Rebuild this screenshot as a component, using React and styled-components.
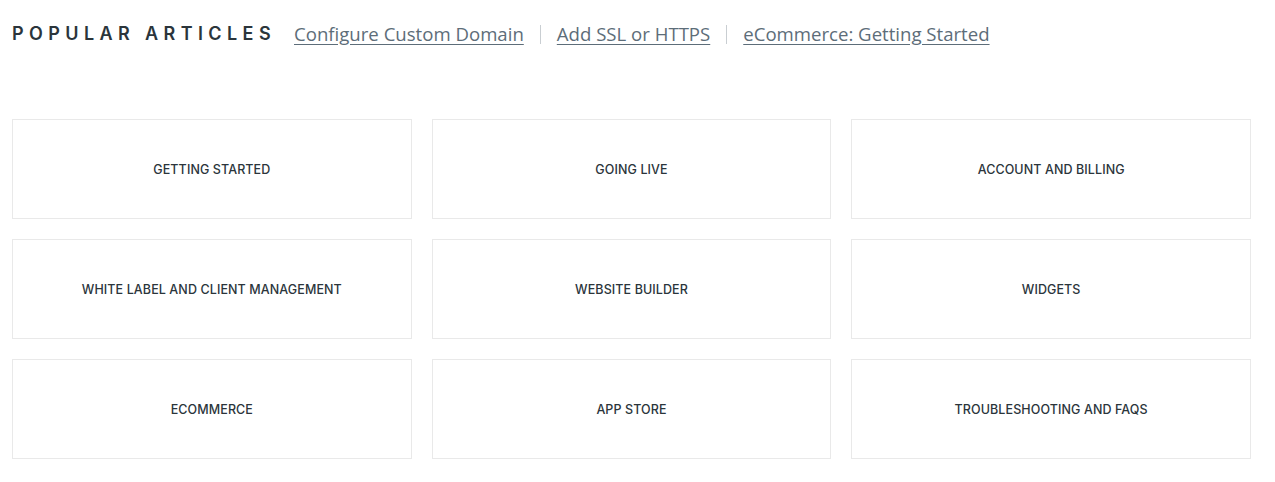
import React from 'react';
import styled, { createGlobalStyle } from 'styled-components';

const GlobalStyle = createGlobalStyle`
  body {
    margin: 0;
    background: #ffffff;
    font-family: "Open Sans", "Liberation Sans", sans-serif;
  }
`;

const Page = styled.div`
  padding: 19px 24px 0 12px;
`;

const Header = styled.div`
  display: flex;
  align-items: center;
  height: 28px;
`;

const Title = styled.h2`
  margin: 0 18px 0 0;
  font-family: Inter, "Noto Sans", sans-serif;
  font-size: 18px;
  font-weight: 600;
  letter-spacing: 5.4px;
  color: #2b353b;
`;

const LinkItem = styled.a`
  font-family: "Open Sans", sans-serif;
  font-size: 18.6px;
  color: #5d6d79;
  text-decoration: underline;
  text-underline-offset: 3px;
  cursor: pointer;
`;

const Divider = styled.span`
  display: inline-block;
  width: 1px;
  height: 19px;
  background: #c9ced2;
  margin: 2px 16px 0;
`;

const Grid = styled.div`
  display: grid;
  grid-template-columns: repeat(3, 1fr);
  gap: 20px 20px;
  margin-top: 72px;
`;

const Card = styled.a`
  display: flex;
  align-items: center;
  justify-content: center;
  box-sizing: border-box;
  height: 100px;
  border: 1px solid #e9e9e9;
  font-family: Inter, "Noto Sans", sans-serif;
  font-size: 12.5px;
  font-weight: 500;
  letter-spacing: 0.1px;
  color: #2b353b;
  text-transform: uppercase;
  cursor: pointer;
`;

const links = ['Configure Custom Domain', 'Add SSL or HTTPS', 'eCommerce: Getting Started'];

const categories = [
  'Getting Started',
  'Going Live',
  'Account and Billing',
  'White Label and Client Management',
  'Website Builder',
  'Widgets',
  'eCommerce',
  'App Store',
  'Troubleshooting and FAQs',
];

export default function App() {
  return (
    <>
      <GlobalStyle />
      <Page>
        <Header>
          <Title>POPULAR ARTICLES</Title>
          {links.map((l, i) => (
            <React.Fragment key={l}>
              {i > 0 && <Divider />}
              <LinkItem>{l}</LinkItem>
            </React.Fragment>
          ))}
        </Header>
        <Grid>
          {categories.map((c) => (
            <Card key={c}>{c}</Card>
          ))}
        </Grid>
      </Page>
    </>
  );
}
